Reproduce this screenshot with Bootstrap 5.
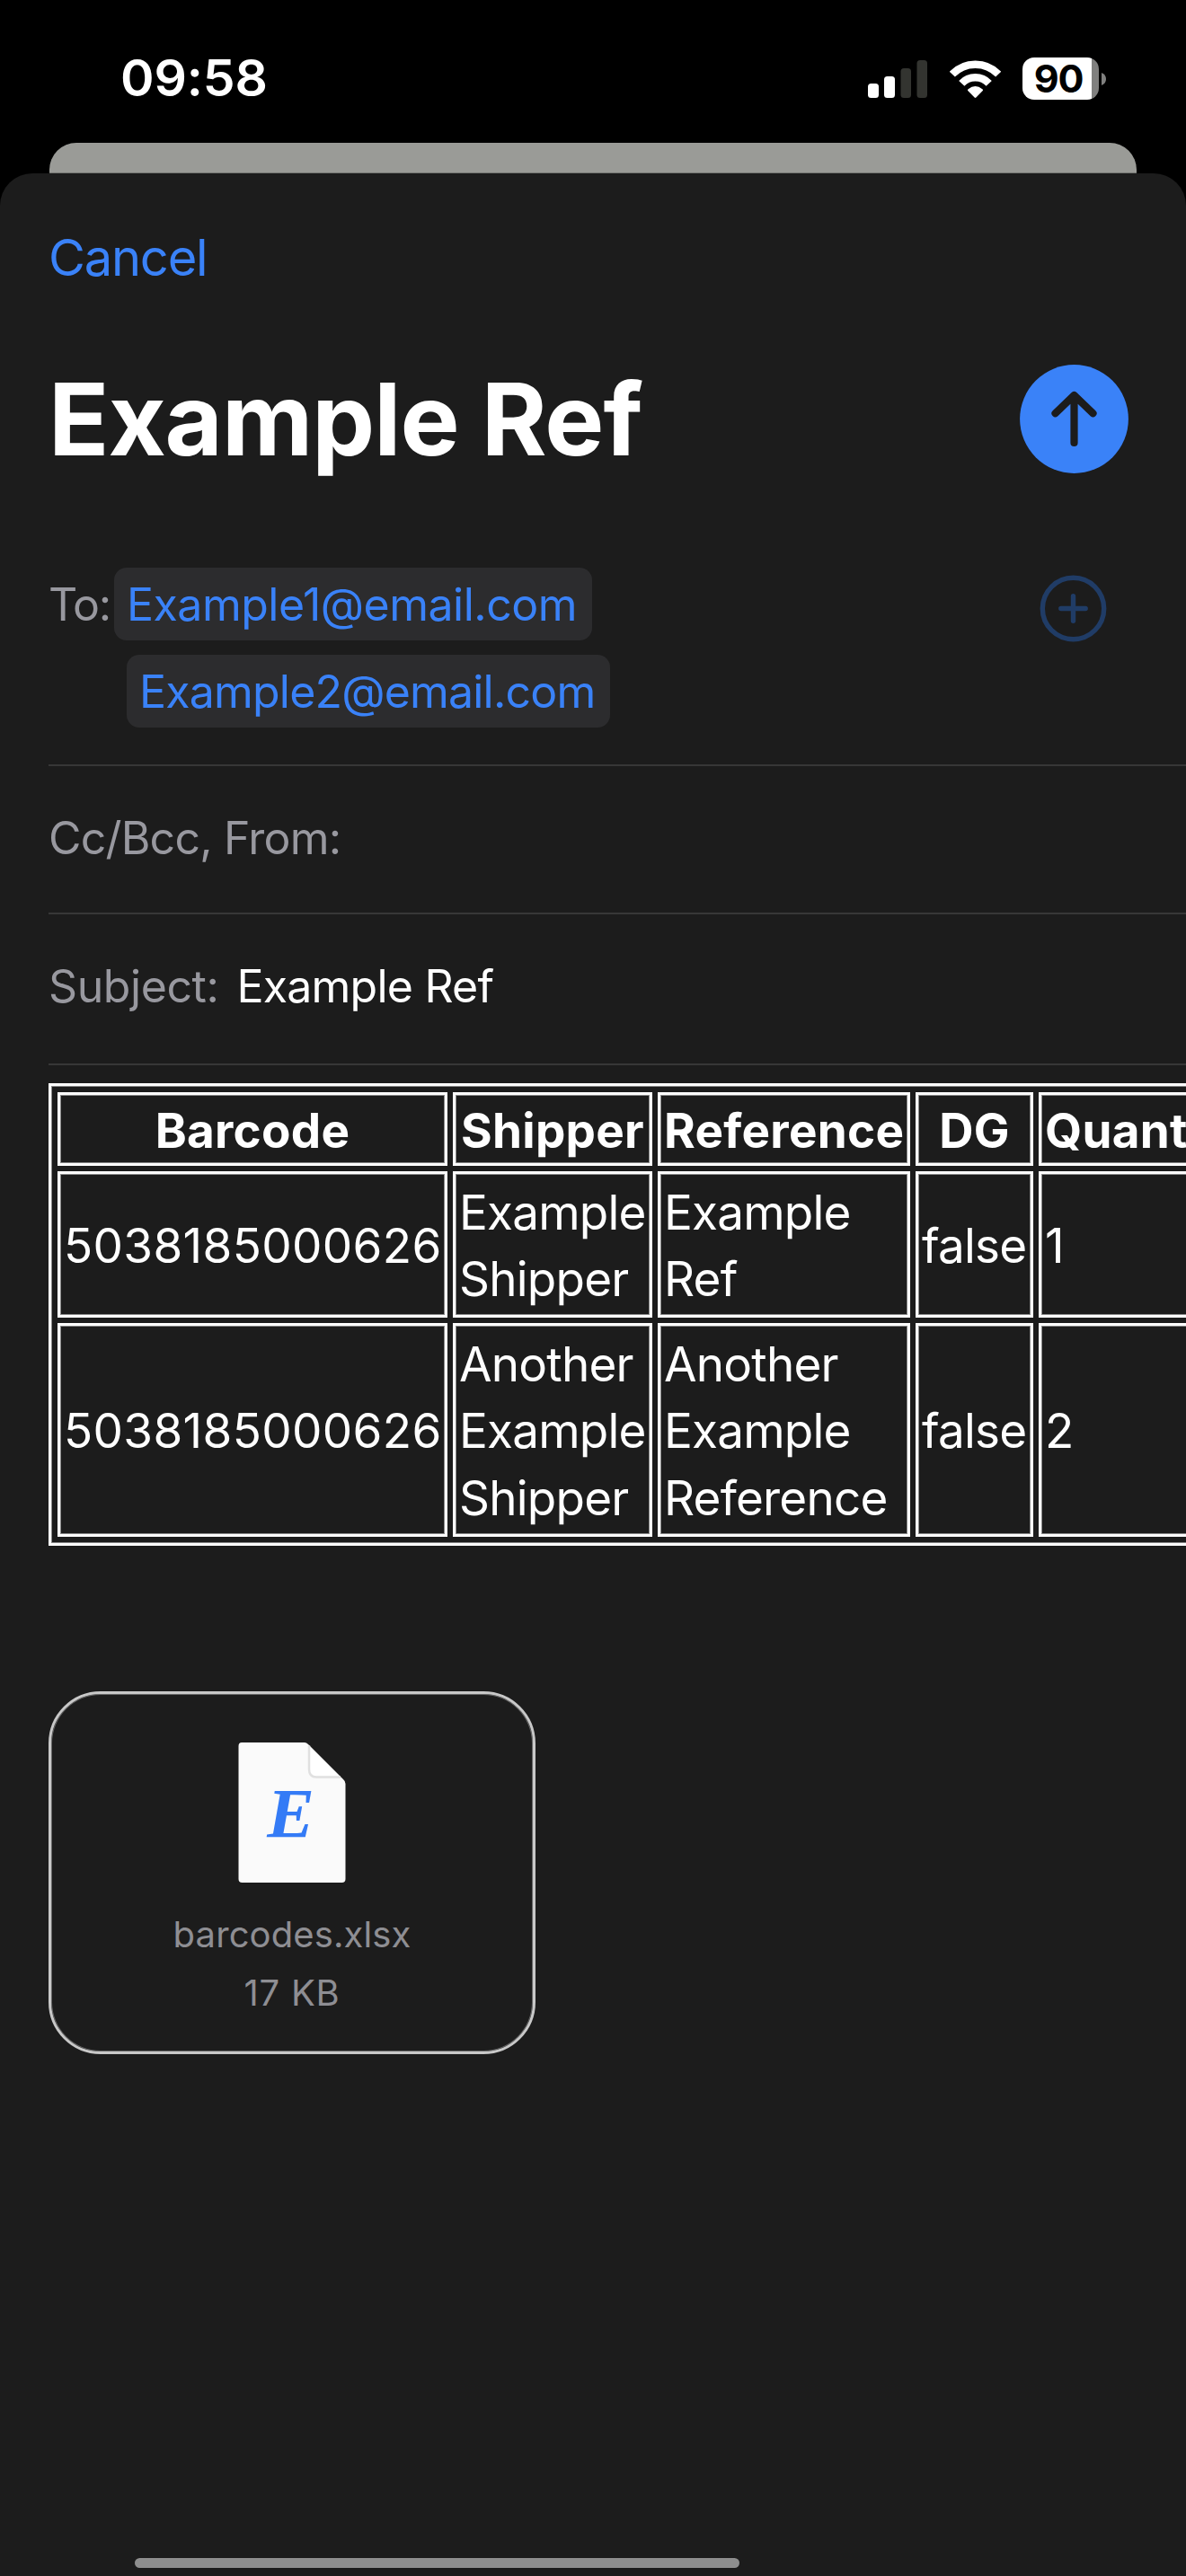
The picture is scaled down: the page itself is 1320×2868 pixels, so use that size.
<!DOCTYPE html>
<html lang="en">
<head>
  <meta charset="UTF-8" />
  <meta name="viewport" content="width=device-width, initial-scale=1" />
  <title>Example Ref</title>

  <!-- Bootstrap CSS -->
  <link href="https://cdn.jsdelivr.net/npm/bootstrap@5.3.3/dist/css/bootstrap.min.css" rel="stylesheet" />

  <style>
    :root {
      --mail-blue: #3a82f8;
      --mail-grey: #98989f;
      --sheet-bg: #1c1c1c;
    }
    body {
      background: #000;
      color: #fff;
      font-family: Inter, "Liberation Sans", sans-serif;
      font-size: 50px;
      line-height: 1.2;
      height: 2868px;
    }
    svg { display: block; flex: none; }

    /* Status bar */
    .status-bar { height: 159px; padding: 16px 89px 0 134px; }
    .clock { font-size: 57px; font-weight: 600; letter-spacing: -.15px; }
    .wifi { margin-left: 25px; }
    .battery {
      width: 85px;
      height: 47px;
      border-radius: 13px;
      font-size: 43px;
      font-weight: 700;
      letter-spacing: -1.3px;
      padding-right: 1px;
      background: linear-gradient(90deg, #fff 77px, #80807f 77px);
      color: #000;
    }

    /* Sheet */
    .sheet-behind {
      height: 34px;
      margin: 0 55px;
      border-radius: 30px 30px 0 0;
      background: #9a9b97;
      border-bottom: 1px solid #747572;
    }
    .sheet { background: var(--sheet-bg); border-radius: 36px 36px 0 0; }
    .cancel-row { height: 189px; padding-left: 54px; }
    .cancel-link { color: var(--mail-blue); font-size: 56px; letter-spacing: -1.2px; }
    .title-row { height: 169px; padding: 0 64px 0 54px; }
    .title-row h1 { font-size: 111px; letter-spacing: -1px; }

    /* Address fields */
    .field { margin-left: 54px; border-bottom: 2px solid #373737; color: var(--mail-grey); }
    .field-to { height: 302px; padding: 81px 88px 0 0; }
    .field-cc { height: 165px; padding-bottom: 4px; letter-spacing: -.8px; }
    .field-subject { height: 168px; padding-bottom: 6px; letter-spacing: -.42px; }
    .field-subject .value { margin-left: 20px; letter-spacing: -.78px; }
    .to-label { width: 73px; height: 81px; letter-spacing: -1.3px; }
    .pill {
      height: 81px;
      width: 532px;
      padding-left: 14px;
      border-radius: 14px;
      background: #2c2c2e;
      color: var(--mail-blue);
      letter-spacing: -.5px;
    }
    .pill-second { width: 538px; margin-left: 14px; letter-spacing: -.8px; }
    .add-contact { margin-top: 8px; }

    /* Message body */
    .message { margin: 20px 0 0 54px; }
    .items {
      width: 1420px;
      table-layout: fixed;
      border: 3px solid #fff;
      border-collapse: separate;
      border-spacing: 6px;
      padding: 1px;
      font-size: 53px;
      line-height: 74.4px;
    }
    .items th, .items td { border: 3px solid #fff; padding: 3px 4px 0; vertical-align: middle; }
    .items, .items th, .items td { box-shadow: inset 0 0 0 1px #8a8a8a; }
    .items th { line-height: 68px; text-align: center; white-space: nowrap; letter-spacing: .27px; }
    .items td { letter-spacing: -.78px; }
    .items td.code { letter-spacing: .35px; }
    .row-head { height: 82px; }
    .row-two { height: 163px; }
    .row-three { height: 238px; }

    /* Attachment */
    .attachment {
      width: 542px;
      height: 404px;
      margin: 162px 0 0 54px;
      padding-top: 53px;
      border: 3px solid #c8c8c8;
      border-radius: 58px;
      box-shadow: inset 0 0 0 1px #666;
      color: #8e8e93;
      font-size: 40px;
      line-height: 65px;
    }
    .attachment .file-name { margin-top: 24px; letter-spacing: .1px; }
    .attachment .file-size { letter-spacing: .75px; }

    .home-bar { width: 673px; height: 11px; margin: 0 0 9px 150px; background: #8e8e8e; }
  </style>
</head>
<body class="d-flex flex-column overflow-hidden">

  <header class="status-bar d-flex align-items-center justify-content-between">
    <div class="clock">09:58</div>
    <div class="d-flex align-items-center">
      <svg width="66" height="42" viewBox="0 0 66 42">
        <rect x="0" y="26" width="12" height="16" rx="3.5" fill="#fff"/>
        <rect x="18" y="18" width="12" height="24" rx="3.5" fill="#fff"/>
        <rect x="36.5" y="9" width="11.5" height="33" rx="3.5" fill="#333430"/>
        <rect x="54.5" y="0" width="11.5" height="42" rx="3.5" fill="#333430"/>
      </svg>
      <svg class="wifi" width="57" height="42" viewBox="0 0 57 42">
        <g fill="none" stroke="#fff" stroke-width="8.5">
          <path d="M2.8 15.6A35.6 35.6 0 0 1 54.2 15.6"/>
          <path d="M13.3 25.8A20.8 20.8 0 0 1 43.7 25.8"/>
        </g>
        <path d="M20.6 32.2Q28.5 26 36.4 32.2Q37.6 33.2 36.5 34.3L29.4 41.5Q28.5 42.4 27.6 41.5L20.5 34.3Q19.4 33.2 20.6 32.2Z" fill="#fff"/>
      </svg>
      <div class="battery d-flex align-items-center justify-content-center ms-4"><span class="pe-1">90</span></div>
      <svg width="8" height="16" viewBox="0 0 8 16">
        <path d="M3 1Q8 3 8 8T3 15Z" fill="#80807f"/>
      </svg>
    </div>
  </header>

  <div class="sheet-behind"></div>

  <main class="sheet d-flex flex-column flex-grow-1 overflow-hidden">
    <div class="cancel-row d-flex align-items-center">
      <a href="#" class="cancel-link text-decoration-none">Cancel</a>
    </div>

    <div class="title-row d-flex align-items-center justify-content-between">
      <h1 class="fw-bold m-0">Example Ref</h1>
      <svg width="121" height="121" viewBox="0 0 121 121">
        <circle cx="60.5" cy="60.5" r="60.4" fill="#3a82f8"/>
        <path d="M39.5 54.2L60.5 34L81.5 54.2M60.5 35V87" fill="none" stroke="#1c1c1c" stroke-width="8.2" stroke-linecap="round" stroke-linejoin="round"/>
      </svg>
    </div>

    <div class="field field-to d-flex align-items-start">
      <div class="to-label d-flex align-items-center">To:</div>
      <div class="d-flex flex-column gap-3">
        <div class="pill d-flex align-items-center">Example1@email.com</div>
        <div class="pill pill-second d-flex align-items-center">Example2@email.com</div>
      </div>
      <svg class="add-contact ms-auto" width="75" height="75" viewBox="0 0 75 75">
        <g fill="none" stroke="#203c66" stroke-width="5.4" stroke-linecap="round">
          <circle cx="37.5" cy="37.5" r="34.2"/>
          <path d="M37.5 23.8V51.2M23.8 37.5H51.2"/>
        </g>
      </svg>
    </div>

    <div class="field field-cc d-flex align-items-center">Cc/Bcc, From:</div>

    <div class="field field-subject d-flex align-items-center">
      <span>Subject:</span>
      <span class="value text-white">Example Ref</span>
    </div>

    <!-- Table runs past the right edge of the sheet -->
    <div class="message overflow-hidden">
      <table class="items">
        <colgroup>
          <col style="width: 434px"><col style="width: 222px"><col style="width: 281px"><col style="width: 131px"><col>
        </colgroup>
        <thead>
          <tr class="row-head">
            <th>Barcode</th>
            <th>Shipper</th>
            <th>Reference</th>
            <th>DG</th>
            <th class="text-start">Quantity</th>
          </tr>
        </thead>
        <tbody>
          <tr class="row-two">
            <td class="code">5038185000626</td>
            <td>Example Shipper</td>
            <td>Example Ref</td>
            <td>false</td>
            <td>1</td>
          </tr>
          <tr class="row-three">
            <td class="code">5038185000626</td>
            <td>Another Example Shipper</td>
            <td>Another Example Reference</td>
            <td>false</td>
            <td>2</td>
          </tr>
        </tbody>
      </table>
    </div>

    <div class="attachment d-flex flex-column align-items-center">
      <svg width="120" height="158" viewBox="0 0 120 158">
        <path d="M4 1H74Q76 1 78 3L117 42Q119.5 44 119.5 47V153Q119.5 157 115.5 157H4.5Q.5 157 .5 153V5Q.5 1 4 1Z" fill="#fafafa"/>
        <path d="M79 4.5V31Q79 39.5 87 39.5H114" fill="#fff" stroke="#e0e0e0" stroke-width="2.5"/>
        <text x="58.5" y="105.5" text-anchor="middle" font-family="Liberation Serif" font-size="79" font-weight="700" font-style="italic" fill="#347bf6">E</text>
      </svg>
      <div class="file-name">barcodes.xlsx</div>
      <div class="file-size">17 KB</div>
    </div>

    <div class="home-bar rounded-pill mt-auto"></div>
  </main>

  <script src="https://cdn.jsdelivr.net/npm/bootstrap@5.3.3/dist/js/bootstrap.bundle.min.js"></script>
</body>
</html>
